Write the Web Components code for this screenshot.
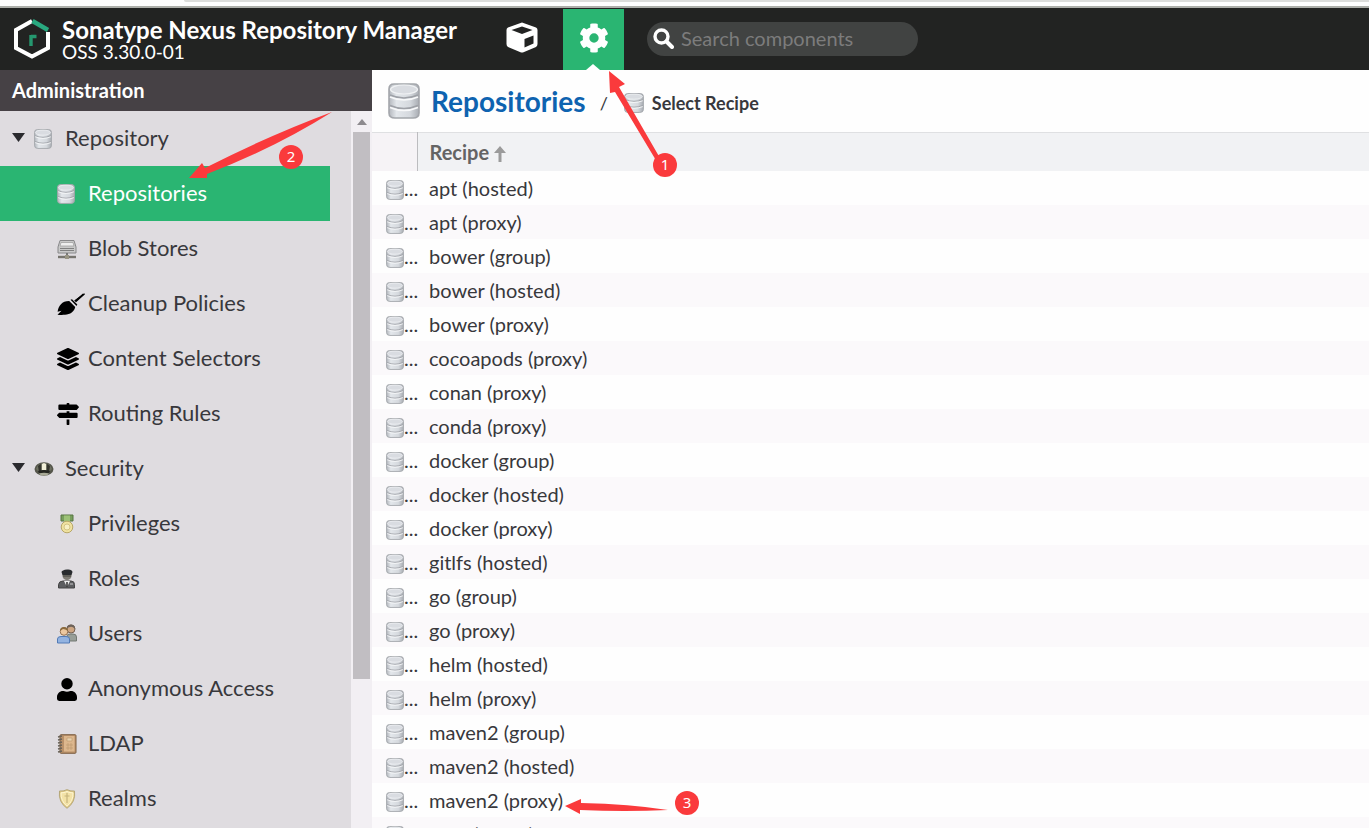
<!DOCTYPE html>
<html lang="en">
<head>
<meta charset="utf-8">
<title>Repositories - Nexus Repository Manager</title>
<style>
:root{--green:#2ab572;--ink:#38383c}
html,body{margin:0;height:100%;overflow:hidden}
body{font-family:Lato,"Open Sans",sans-serif;color:var(--ink);background:#fefefe}
</style>
</head>
<body>
<nexus-app></nexus-app>
<script>
const DB = `<svg viewBox="0 0 32 36" preserveAspectRatio="none" aria-hidden="true">
<defs><linearGradient id="g"><stop offset="0" stop-color="#b3b7bd"/><stop offset=".25" stop-color="#e3e7eb"/><stop offset=".7" stop-color="#d5d9de"/><stop offset="1" stop-color="#a9adb3"/></linearGradient></defs>
<path d="M1 6Q1 1 6 1H26Q31 1 31 6V30Q31 35 25 35H7Q1 35 1 30Z" fill="url(#g)" stroke="#a3a6ab" stroke-width="1.6"/>
<ellipse cx="16" cy="6.500" rx="13.500" ry="4.500" fill="#d9dce1" stroke="#f0f2f4" stroke-width="1.200"/>
<path d="M2 12Q16 18 30 12M2 22.500Q16 28.500 30 22.500" fill="none" stroke="#9ea1a7" stroke-width="1.500"/>
<path d="M2 14Q16 20 30 14M2 24.500Q16 30.500 30 24.500" fill="none" stroke="#f8f9fa" stroke-width="1.500"/></svg>`;
const ICONS = {
db: DB,
blob:`<svg viewBox="0 0 20 20"><path d="M3 1.500H17L19 8V14H1V8Z" fill="#c9c9c9" stroke="#88888a"/><path d="M4 3.500H16L17 7H3Z" fill="#eee" stroke="#999" stroke-width=".7"/><path d="M3 9.500H17M3 11.500H17" stroke="#777" stroke-width=".9"/><path d="M10 14V17" stroke="#777" stroke-width="2"/><path d="M1 18H19" stroke="#77756f" stroke-width="2.400"/><rect x="8" y="16" width="4" height="4" fill="#999584"/></svg>`,
broom:`<svg viewBox="0 0 28 22"><path d="M27.200.200 28 1.200 19 9.200 17.200 7.600Z"/><path d="M26.500 1 18.500 8" stroke="#000" stroke-width="1.600"/><path d="M13.500 6.800 15 6.200 20.300 11.400 19.500 13Z"/><path d="M12.200 8.100 18.200 14C17.600 18.500 13 21.500 8 21.800 5 22 2.500 21.900.500 21.700L4.500 17.800.600 18.800C1.500 13 5 8 12.200 8.100Z"/></svg>`,
layers:`<svg viewBox="0 0 512 512"><path d="M12.400 148l232.900 105.700c6.800 3 14.500 3 21.300 0L499.600 148c16.500-7.500 16.500-32.500 0-40L266.600 2.300a25.600 25.600 0 0 0-21.300 0L12.400 108c-16.500 7.500-16.500 32.500 0 40zM499.600 236.300l-58.100-26.300-161.600 73.300c-7.600 3.400-15.600 5.200-23.900 5.200s-16.300-1.700-23.900-5.200L70.500 210l-58.100 26.300c-16.500 7.500-16.500 32.500 0 40l232.900 105.600c6.800 3 14.500 3 21.300 0L499.600 276.300c16.500-7.500 16.500-32.500 0-40zM499.600 364.100l-57.900-26.200-161.800 73.400c-7.600 3.400-15.600 5.200-23.900 5.200s-16.300-1.700-23.900-5.200L70.300 337.900 12.400 364.100c-16.500 7.500-16.500 32.500 0 40l232.900 105.600c6.800 3 14.500 3 21.300 0L499.600 404.100c16.500-7.500 16.500-32.500 0-40z"/></svg>`,
signs:`<svg viewBox="0 0 512 512"><path d="M507.300 84.700 462.600 40a16 16 0 0 0-11.300-4.700H288V16a16 16 0 0 0-16-16h-32a16 16 0 0 0-16 16v19H56a24 24 0 0 0-24 24v80a24 24 0 0 0 24 24h395.300c4.300 0 8.300-1.700 11.300-4.700l44.700-51c6.200-6.300 6.200-16.400 0-22.600zM224 496a16 16 0 0 0 16 16h32a16 16 0 0 0 16-16V384h-64zM456 224H288v-32h-64v32H60.700c-4.300 0-8.300 1.700-11.300 4.700L4.700 273.400a16 16 0 0 0 0 22.600l44.700 49.300c3 3 7 4.700 11.300 4.700H456a24 24 0 0 0 24-24v-78a24 24 0 0 0-24-24z"/></svg>`,
hat:`<svg viewBox="0 0 20 16"><ellipse cx="10" cy="8" rx="9.500" ry="6.800" fill="#55564b"/><path d="M2 8Q4 2 10 2T18 8L15 11H5Z" fill="#6e7061"/><path d="M4 5Q6 3 7 3V10L5 11ZM16 5Q14 3 13 3V10L15 11Z" fill="#34352d"/><path d="M8 3 10 2 12 3V9H8Z" fill="#f1efd8"/><path d="M4 10Q10 8 16 10L15 12H5Z" fill="#252620"/><path d="M5 12.500Q10 11 15 12.500L13 14.500H7Z" fill="#a9aa97"/></svg>`,
medal:`<svg viewBox="0 0 20 20"><path d="M4 1H16V7H4Z" fill="#789f5d" stroke="#567443"/><path d="M7 1.500H13V7L10 9 7 7Z" fill="#9dc277"/><circle cx="10" cy="13" r="5.800" fill="#f0e2a0" stroke="#b8a768"/><circle cx="10" cy="13" r="3" fill="#f8f0c4" stroke="#cbbb76" stroke-width=".8"/></svg>`,
role:`<svg viewBox="0 0 20 20"><path d="M1.500 19V15.500Q2 12 6 12H14Q17.500 12 17.500 15.500V19Z" fill="#5c5d60" stroke="#444"/><path d="M7 12 10 18 13 12Z" fill="#eee"/><path d="M10 13V18" stroke="#333" stroke-width="1.500"/><circle cx="10" cy="6.500" r="4.600" fill="#7f7c75"/><path d="M4.500 3Q5 1 10 .500T15.500 3L14.500 6H5.500Z" fill="#292b2e"/><path d="M6 7H14" stroke="#44423f"/><path d="M13 15H16" stroke="#c9c9c9"/></svg>`,
users:`<svg viewBox="0 0 20 20"><circle cx="14" cy="5" r="4" fill="#cda683" stroke="#766152"/><path d="M9.800 4Q10 .500 14 .500T18.200 5Q15 2 13 3Z" fill="#6d625a"/><path d="M10 17V12Q10 10 13 10H16Q19.500 10 19.500 13V17Z" fill="#989e98" stroke="#737873"/><circle cx="7" cy="7.500" r="3.800" fill="#ecc8a0" stroke="#967250"/><path d="M3 7Q3 3 7 3T11 7Q8 5 6 5Z" fill="#8b6b3e"/><path d="M.500 19V15Q.500 12.500 4 12.500H9Q12.500 12.500 12.500 15V19Z" fill="#93b3e1" stroke="#527bb6"/></svg>`,
user:`<svg viewBox="0 0 448 512" preserveAspectRatio="none"><path d="M224 256a128 128 0 1 0 0-256 128 128 0 1 0 0 256zm90 32h-17a174 174 0 0 1-146 0h-17C60 288 0 348 0 422v42a48 48 0 0 0 48 48h352a48 48 0 0 0 48-48v-42c0-74-60-134-134-134z"/></svg>`,
book:`<svg viewBox="0 0 20 20"><rect x="3" y=".700" width="16" height="18.600" rx="1" fill="#b9916a" stroke="#7e6043"/><rect x="7" y="2" width="10.500" height="15.500" fill="#ddb78d"/><path d="M10 4H15V7H10ZM9 11H16M9 14H16M11 9V16M14 9V16" fill="#ead2ae" stroke="#b8976c" stroke-width=".6"/><path d="M1 3 5 2M1 6 5 5M1 9 5 8M1 12 5 11M1 15 5 14M1 18 5 17" stroke="#69635a" stroke-width="1.400"/></svg>`,
shield:`<svg viewBox="0 0 20 20"><path d="M10 .700Q14 2.500 17.500 2Q19 13 10 19.300Q1 13 2.500 2Q6 2.500 10 .700Z" fill="#e4cc87" stroke="#b5a778"/><path d="M10 2.500Q13 4 16 3.800Q16.500 12 10 17.200Q3.500 12 4 3.800Q7 4 10 2.500Z" fill="#f3e2a7" stroke="#fff8d5"/><path d="M10 4V14M7.500 7H12.500" stroke="#c6b47c" stroke-width="1.200"/></svg>`
};

class XIcon extends HTMLElement{
  connectedCallback(){
    const w=this.getAttribute('w')||20,h=this.getAttribute('h')||20;
    this.attachShadow({mode:'open'}).innerHTML=`<style>:host{display:block;flex:none;width:${w}px;height:${h}px}svg{display:block;width:100%;height:100%}</style>${ICONS[this.getAttribute('name')]}`;
  }
}
customElements.define('nx-icon',XIcon);

class XHeader extends HTMLElement{
  constructor(){super();this.attachShadow({mode:'open'}).innerHTML=`<style>
:host{display:block}
.edge{height:2px;margin-left:184px;background:#dcdddb;border-bottom-left-radius:2px}
.line{height:2px;margin-top:4px;background:#adafaa}
header{height:62px;background:#222322;display:flex;align-items:center;color:#fff}
.logo{flex:none;width:38px;height:42px;margin-left:13px}
.brand{margin-left:11px;width:443px;white-space:nowrap;padding-top:2px}
h1{margin:0;font-size:24px;line-height:24px;font-weight:700}
p{margin:0;font-size:19px;line-height:20px}
button{all:unset;box-sizing:border-box;width:61px;height:61px;align-self:flex-end;display:flex;align-items:center;justify-content:center;position:relative}
.cube{margin-left:-14px;margin-right:11px}
.on{background:var(--green)}
.on::after{content:"";position:absolute;bottom:0;left:23px;border:7px solid transparent;border-top:0;border-bottom:6px solid #fff}
button svg{margin-bottom:4px}
label{margin-left:23px;width:271px;height:34px;border-radius:17px;background:#414342;display:flex;align-items:center;box-sizing:border-box;padding:0 6px}
label svg{flex:none;margin-bottom:2px}
input{all:unset;flex:1;min-width:0;margin-left:7px;margin-bottom:3px;font-size:20px;line-height:28px}
input::placeholder{color:#7c7c7c;opacity:1}
</style>
<div class="edge"></div><div class="line"></div>
<header>
<svg class="logo" viewBox="0 0 38 42" fill="none" stroke-width="4"><path d="M19 3 3 12V30L19 38.500 35 30V14" stroke="#fff"/><path d="M19.500 3 35 12" stroke="#29a980" stroke-width="4.500"/><path d="M18 28V17M18 18.500H23.500" stroke="#25986f" stroke-width="3.400"/></svg>
<div class="brand"><h1>Sonatype Nexus Repository Manager</h1><p>OSS 3.30.0-01</p></div>
<button class="cube" aria-label="Browse"><svg width="32" height="31" viewBox="0 0 32 31"><path d="M16 .500 30 5.500Q31.500 6 31.500 8V22Q31.500 24 30 25L17.500 30.200Q16 30.800 14.500 30.200L2 25Q.500 24 .500 22V8Q.500 6 2 5.500Z" fill="#fff"/><path d="M16 4.500 26.500 8 16 12 5.500 8Z" fill="#222322"/><path d="M18.500 17 27.500 13.500V21.500L18.500 25.500Z" fill="#222322"/></svg></button>
<button class="on" aria-label="Administration"><svg width="30" height="30" viewBox="0 0 512 512"><path fill="#fff" fill-rule="evenodd" d="M487.400 315.700l-42.600-24.600c4.300-23.200 4.300-47 0-70.200l42.600-24.600c4.900-2.800 7.100-8.600 5.500-14-11.100-35.600-30-67.800-54.700-94.600-3.800-4.100-10-5.100-14.800-2.300L380.800 110c-17.900-15.400-38.500-27.300-60.800-35.100V25.800c0-5.600-3.900-10.500-9.400-11.700-36.700-8.200-74.300-7.800-109.200 0-5.500 1.200-9.400 6.100-9.400 11.700V75c-22.200 7.900-42.800 19.800-60.800 35.100L88.700 85.500c-4.900-2.800-11-1.900-14.800 2.300-24.700 26.700-43.600 58.900-54.700 94.600-1.700 5.400.6 11.200 5.500 14L67.300 221c-4.300 23.200-4.300 47 0 70.200l-42.600 24.600c-4.900 2.800-7.100 8.600-5.500 14 11.100 35.600 30 67.800 54.700 94.600 3.800 4.100 10 5.100 14.800 2.300l42.600-24.600c17.900 15.400 38.500 27.300 60.800 35.100v49.200c0 5.600 3.900 10.500 9.400 11.700 36.700 8.200 74.300 7.800 109.200 0 5.500-1.200 9.400-6.100 9.400-11.700v-49.200c22.200-7.900 42.800-19.800 60.800-35.100l42.600 24.600c4.900 2.800 11 1.900 14.800-2.300 24.700-26.700 43.600-58.900 54.700-94.600 1.500-5.500-.7-11.300-5.600-14.100zM256 336a80 80 0 1 1 0-160 80 80 0 1 1 0 160z"/></svg></button>
<label><svg width="21" height="21" viewBox="0 0 21 21" fill="none" stroke="#fff"><circle cx="8.500" cy="8.500" r="6.500" stroke-width="3.400"/><path d="M13.500 13.500 19 19" stroke-width="4" stroke-linecap="round"/></svg><input type="search" placeholder="Search components" aria-label="Search components"></label>
</header>`}
}
customElements.define('nx-header',XHeader);

class XItem extends HTMLElement{
  connectedCallback(){
    const g=this.hasAttribute('group'),n=this.getAttribute('icon');
    const [w,h]=({broom:[28,22],layers:[22,22],signs:[22,22],user:[20,23],db:[18,20],hat:[20,16]})[n]||[20,20];
    this.attachShadow({mode:'open'}).innerHTML=`<style>
:host{display:block}
a{display:flex;align-items:center;height:55px;color:var(--ink);text-decoration:none;font-size:22px;line-height:28px;box-sizing:border-box;padding-left:${g?12:57}px;padding-bottom:1px;margin-right:21px;white-space:nowrap}
:host([selected]) a{background:var(--green);color:#fff}
.i{flex:none;width:31px;display:flex;padding-top:2px}
.t{flex:none;width:13px;height:9px;margin-right:9px;margin-bottom:2px}
</style><a href="#">${g?'<svg class="t" viewBox="0 0 13 9"><path d="M0 0H13L6.500 9Z" fill="#2a2a2e"/></svg>':''}<span class="i"><nx-icon name="${n}" w="${w}" h="${h}"></nx-icon></span><slot></slot></a>`;
  }
}
customElements.define('nx-item',XItem);

class XSidebar extends HTMLElement{
  constructor(){super();this.attachShadow({mode:'open'}).innerHTML=`<style>
:host{display:flex;flex-direction:column;flex:none;width:372px;min-height:0}
h2{margin:0;height:41px;line-height:40px;padding-left:12px;font-size:20px;font-weight:700;color:#fff;background:#464145}
.body{flex:1;display:flex;min-height:0;background:#dfdce0}
nav{flex:1;overflow:hidden}
.bar{width:17px;padding:0 2px;background:#f2eff3;display:flex;flex-direction:column}
.up{flex:none;height:21px;display:flex;align-items:center;justify-content:center}
.thumb{flex:11;background:#c1bec2}
.rest{flex:3}
</style><h2>Administration</h2><div class="body"><nav aria-label="Administration">
<nx-item group icon="db">Repository</nx-item>
<nx-item icon="db" selected>Repositories</nx-item>
<nx-item icon="blob">Blob Stores</nx-item>
<nx-item icon="broom">Cleanup Policies</nx-item>
<nx-item icon="layers">Content Selectors</nx-item>
<nx-item icon="signs">Routing Rules</nx-item>
<nx-item group icon="hat">Security</nx-item>
<nx-item icon="medal">Privileges</nx-item>
<nx-item icon="role">Roles</nx-item>
<nx-item icon="users">Users</nx-item>
<nx-item icon="user">Anonymous Access</nx-item>
<nx-item icon="book">LDAP</nx-item>
<nx-item icon="shield">Realms</nx-item>
</nav><div class="bar"><div class="up"><svg width="10" height="6"><path d="M0 6 5 0 10 6Z" fill="#8d8a8e"/></svg></div><div class="thumb"></div><div class="rest"></div></div></div>`}
}
customElements.define('nx-sidebar',XSidebar);

class XRecipes extends HTMLElement{
  constructor(){super();
  const rows=['apt (hosted)','apt (proxy)','bower (group)','bower (hosted)','bower (proxy)','cocoapods (proxy)','conan (proxy)','conda (proxy)','docker (group)','docker (hosted)','docker (proxy)','gitlfs (hosted)','go (group)','go (proxy)','helm (hosted)','helm (proxy)','maven2 (group)','maven2 (hosted)','maven2 (proxy)','npm (group)'];
  this.attachShadow({mode:'open'}).innerHTML=`<style>
:host{display:block;flex:1;min-width:0;overflow:hidden;background:#fefefe}
.crumb{height:62px;display:flex;align-items:center;padding-left:16px;white-space:nowrap}
.crumb a{margin-left:11px;font-size:28px;line-height:32px;font-weight:700;color:#0e63b0;text-decoration:none}
.sep{margin:0 16px 0 14px;font-size:18px;line-height:24px;padding-top:4px}
.crumb nx-icon+b{margin-left:8px;font-size:18px;line-height:24px;padding-top:4px}
.sep+nx-icon{margin-top:4px}
table{width:100%;border-collapse:collapse;table-layout:fixed;border-spacing:0}
col:first-child{width:45px}
th{height:37px;padding:0 0 1px 12px;border-top:1px solid #dfe0e2;background:#f1f2f4;text-align:left;font-size:20px;line-height:24px;color:#646464}
th:first-child{border-right:1px solid #bcbcbf;background:#f6f3f6}
th svg{margin-left:5px;vertical-align:-2px}
td{height:34px;padding:0 0 0 12px;font-size:20px;line-height:24px;white-space:nowrap}
td:first-child{padding:0 0 0 14px}
td div{display:flex;align-items:center}
td nx-icon{margin-top:3px}
tr:nth-child(even) td{background:#fbf9fb}
</style>
<div class="crumb"><nx-icon name="db" w="32" h="36"></nx-icon><a href="#">Repositories</a><span class="sep">/</span><nx-icon name="db" w="20" h="20"></nx-icon><b>Select Recipe</b></div>
<table><colgroup><col><col></colgroup><thead><tr><th aria-label="Icon"></th><th>Recipe<svg width="12" height="16" viewBox="0 0 12 16"><path d="M6 0 12 7H7.500V16H4.500V7H0Z" fill="#9b9b9b"/></svg></th></tr></thead><tbody>${rows.map(r=>`<tr><td><div><nx-icon name="db" w="18" h="20"></nx-icon>...</div></td><td>${r}</td></tr>`).join('')}</tbody></table>`}
}
customElements.define('nx-recipes',XRecipes);

class XNotes extends HTMLElement{
  constructor(){super();this.attachShadow({mode:'open'}).innerHTML=`<style>
:host{position:absolute;left:0;top:0;pointer-events:none}
svg{display:block;font-family:"Noto Sans",sans-serif;font-size:15px}
</style><svg width="760" height="828" fill="#fa3a3c"><path d="M609 71 625 84 619 87 664 165 657 162 615 92 610 93Z"/><path d="M189 178 202 163 205 168Q270 135 332 112Q275 148 207 174L207 178Z"/><path d="M565 806 581 799V803Q630 804 668 810Q625 812 580 810V814Z"/><circle cx="665" cy="165" r="12"/><circle cx="291" cy="157" r="12"/><circle cx="687" cy="803" r="12"/><g fill="#fff" text-anchor="middle"><text x="665" y="170">1</text><text x="291" y="162">2</text><text x="687" y="808">3</text></g></svg>`}
}
customElements.define('nx-notes',XNotes);

class XApp extends HTMLElement{
  constructor(){super();this.attachShadow({mode:'open'}).innerHTML=`<style>
:host{display:flex;flex-direction:column;height:100vh;overflow:hidden;position:relative}
main{display:flex;flex:1;min-height:0}
</style><nx-header></nx-header><main><nx-sidebar></nx-sidebar><nx-recipes></nx-recipes></main><nx-notes></nx-notes>`}
}
customElements.define('nexus-app',XApp);
</script>
</body>
</html>
